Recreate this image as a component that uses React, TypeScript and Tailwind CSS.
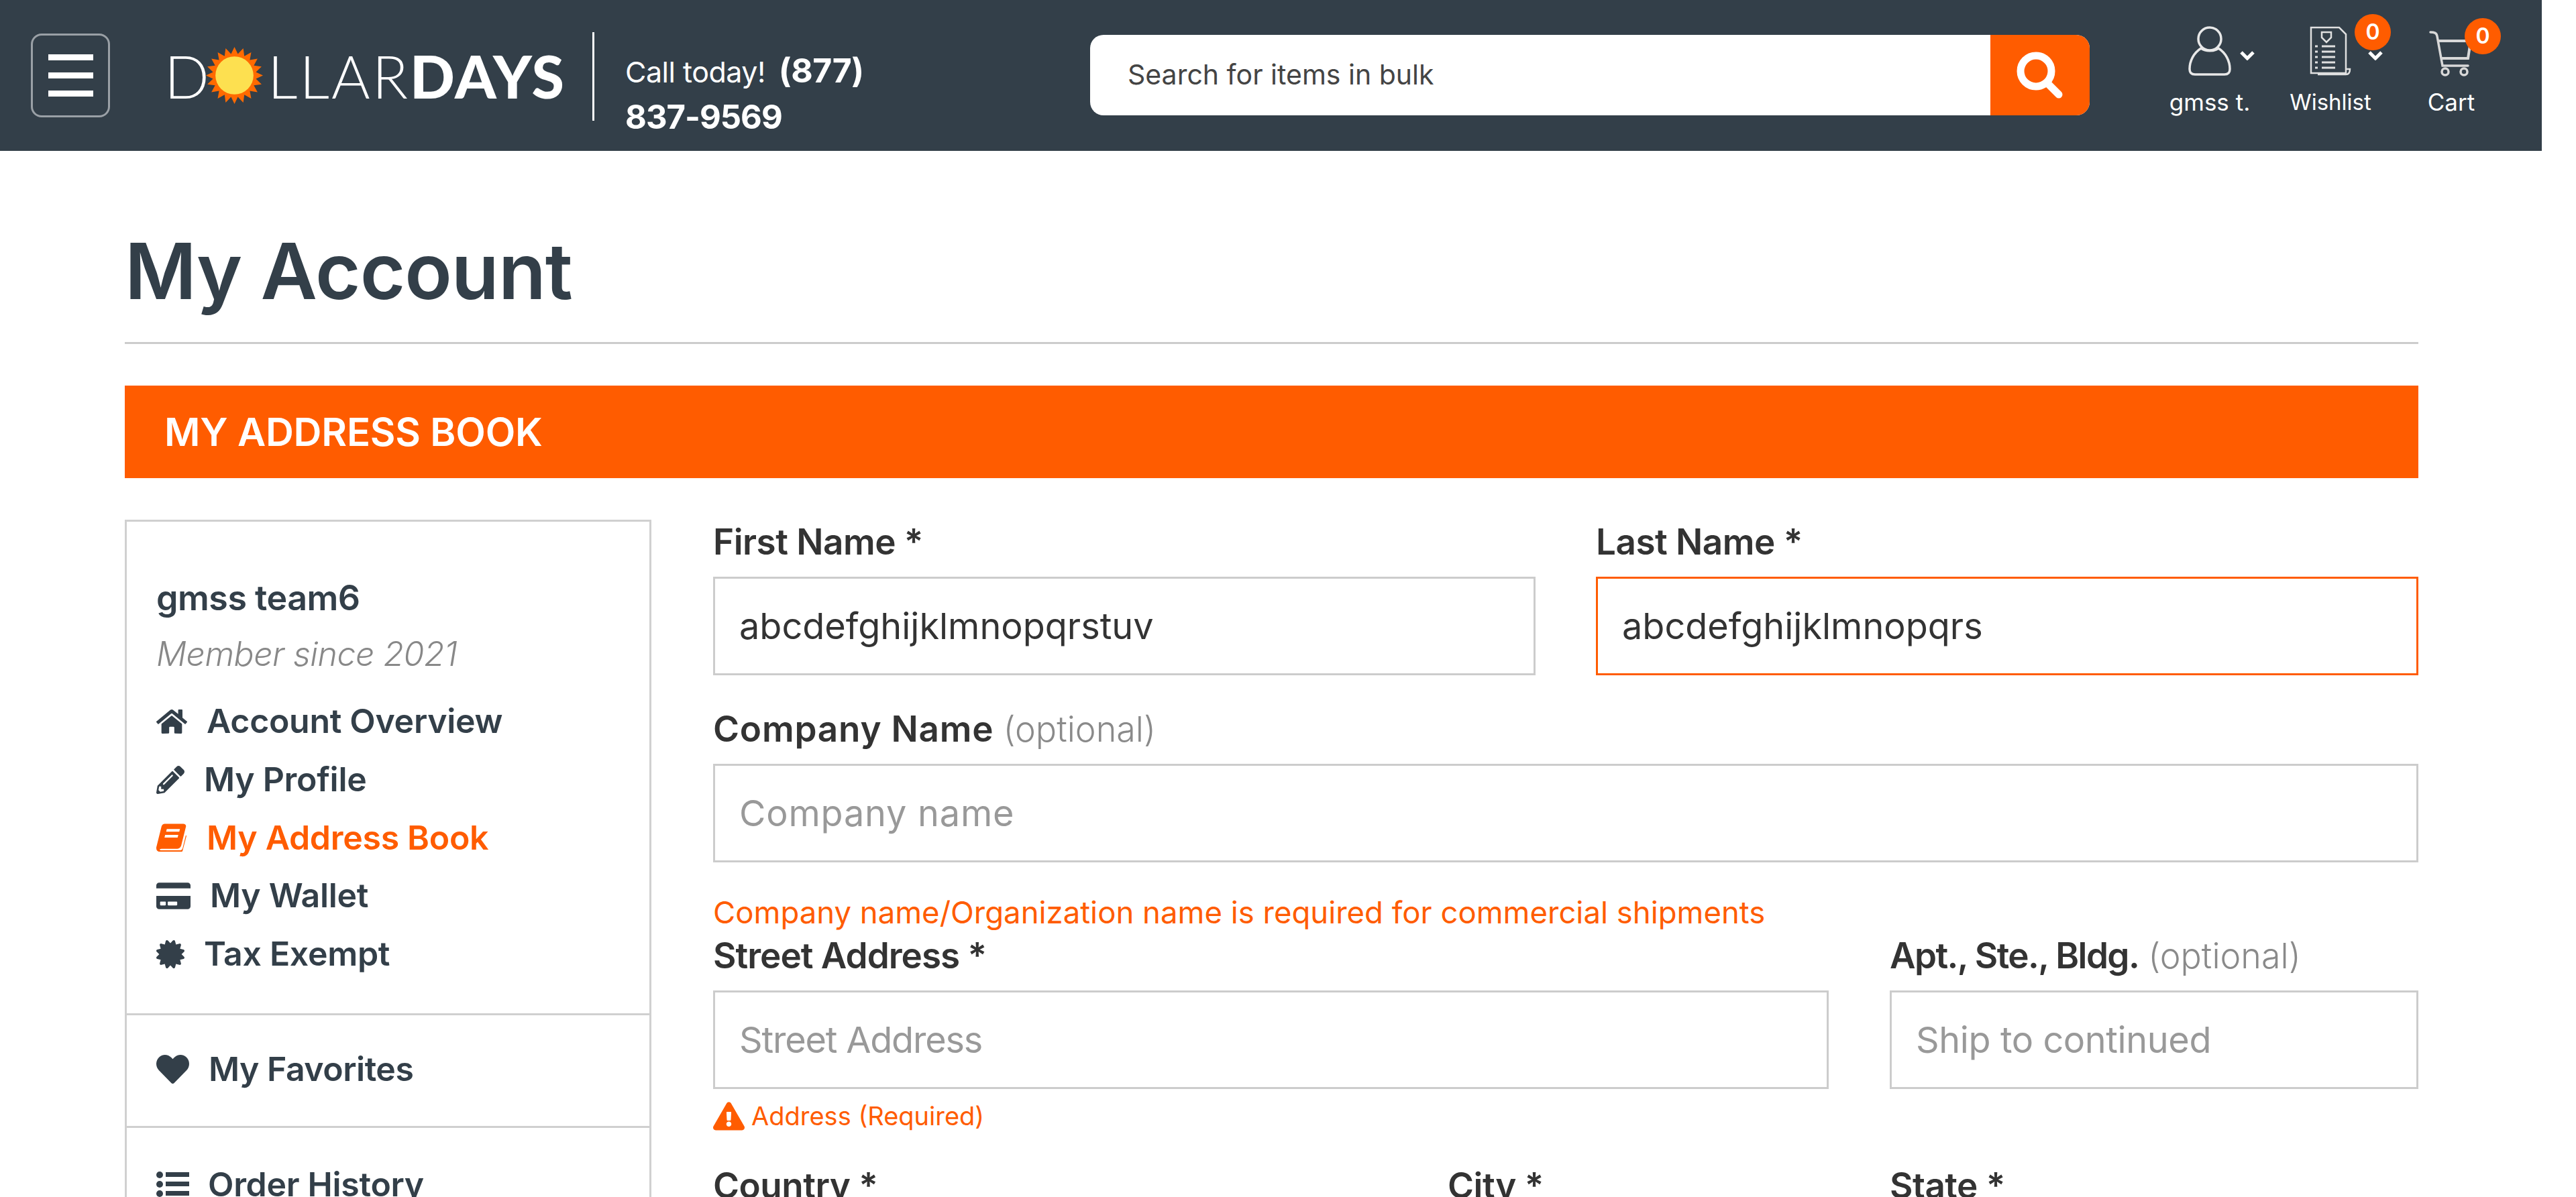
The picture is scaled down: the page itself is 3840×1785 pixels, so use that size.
import { FaCertificate, FaCreditCard, FaExclamationTriangle, FaHeart, FaHome, FaPencilAlt } from 'react-icons/fa'

function BookIcon({ className }: { className?: string }) {
  return (
    <svg viewBox="0 0 46 42" className={className} fill="currentColor">
      <path d="M13 0h28c3 0 5 2 4 5l-7 28c-1 3-3 5-6 5H8c-2 0-3 1-3 1.200 0 .6 1 1.300 3 1.300h28c2 0 3-1 4-3l5-20 1 1-6 23c-.5 1-1.500 1.500-3 1.500H7c-4 0-7-2-7-6 0-1 0-2 .5-3L8 4c.8-2.500 2.500-4 5-4zm3 8-1 4h20l1-4zm-2.500 9-1 4h20l1-4z" fillRule="evenodd" />
    </svg>
  )
}

function ListIcon({ className }: { className?: string }) {
  return (
    <svg viewBox="0 0 49 40" className={className} fill="currentColor">
      <circle cx="5" cy="6" r="5" />
      <circle cx="5" cy="20" r="5" />
      <circle cx="5" cy="34" r="5" />
      <rect x="14" y="2" width="35" height="7" />
      <rect x="14" y="16" width="35" height="7" />
      <rect x="14" y="30" width="35" height="7" />
    </svg>
  )
}

const NAV = [
  { label: 'Account Overview', icon: FaHome, size: 'w-[46px] h-[42px]', gap: 'mr-[31px]', row: 'h-[87px]' },
  { label: 'My Profile', icon: FaPencilAlt, size: 'w-[42px] h-[42px]', gap: 'mr-[31px]', row: 'h-[87px]' },
  { label: 'My Address Book', icon: BookIcon, size: 'w-[45px] h-[42px]', gap: 'mr-[32px]', row: 'h-[86px]', active: true },
  { label: 'My Wallet', icon: FaCreditCard, size: 'w-[51px] h-[46px]', gap: 'mr-[31px]', row: 'h-[87px]' },
  { label: 'Tax Exempt', icon: FaCertificate, size: 'w-[42px] h-[42px]', gap: 'mr-[31px]', row: 'h-[87px]' },
]

function sunPoints() {
  const pts: string[] = []
  for (let i = 0; i < 40; i++) {
    const r = i % 2 === 0 ? 42 : 32
    const a = (i / 40) * Math.PI * 2
    pts.push(`${42 + r * Math.cos(a)},${42 + r * Math.sin(a)}`)
  }
  return pts.join(' ')
}

function Field({ label, optional, className, labelClass, inputClass, value, placeholder, error }: {
  label: string
  optional?: boolean
  className?: string
  labelClass?: string
  inputClass?: string
  value?: string
  placeholder?: string
  error?: boolean
}) {
  return (
    <div className={className}>
      <label className="block h-[66px] mb-[19px] text-[53px] leading-[66px] font-semibold text-[#333] whitespace-nowrap">
        <span className={labelClass ?? 'tracking-[-0.5px]'}>{label}</span>
        {optional && <span className="ml-[14px] text-[52px] font-light text-[#8a8a8a]">(optional)</span>}
      </label>
      <input
        readOnly
        defaultValue={value}
        placeholder={placeholder}
        className={`block w-full h-[147px] px-[36px] border-[3px] bg-white text-[54px] text-[#333] placeholder:text-[#999] outline-none ${error ? 'border-[#ff5c00]' : 'border-[#ccc]'} ${inputClass ?? ''}`}
      />
    </div>
  )
}

export default function App() {
  return (
    <div className="w-[3789px] h-[1785px] overflow-hidden bg-white font-['Inter',sans-serif]">
      {/* Header */}
      <header className="h-[225px] bg-[#333f49] flex items-center text-white">
        <button className="ml-[46px] w-[118px] h-[125px] border-[3px] border-[#9aa0a6] rounded-[16px] flex flex-col items-center justify-center gap-[18px]">
          <span className="block w-[67px] h-[9px] bg-white" />
          <span className="block w-[67px] h-[9px] bg-white" />
          <span className="block w-[67px] h-[9px] bg-white" />
        </button>

        {/* Logo */}
        <div className="ml-[81px] w-[593px] flex items-center font-['Lato',sans-serif] text-[88px] leading-none">
          <span className="font-light">D</span>
          <svg viewBox="0 0 84 84" className="w-[85px] h-[85px] -ml-[5px] shrink-0">
            <polygon points={sunPoints()} fill="#ff6a00" />
            <circle cx="42" cy="42" r="28" fill="#fde050" />
          </svg>
          <span className="ml-[7px] font-light tracking-[3px]">LLAR</span>
          <span className="font-black tracking-[2px]">DAYS</span>
        </div>

        <div className="ml-[45px] w-[3px] h-[132px] mt-[3px] bg-white" />

        <div className="ml-[46px] w-[370px] pt-[54px] text-[49px] leading-[67px] font-bold tracking-[-0.5px] whitespace-nowrap">
          <div className="flex items-baseline">
            <span className="text-[43px] font-normal mr-[20px] tracking-[-0.5px]">Call today!</span>
            <span className="text-[50px]">(877)</span>
          </div>
          <div className="tracking-[-1px]">837-9569</div>
        </div>

        {/* Search */}
        <div className="ml-[323px] w-[1490px] h-[120px] -mt-[2px] flex rounded-[20px] overflow-hidden bg-white">
          <div className="flex-1 pl-[56px] flex items-center text-[41px] text-[#444]">Search for items in bulk</div>
          <button className="w-[148px] bg-[#ff5c00] flex items-center justify-center">
            <svg viewBox="0 0 70 70" className="w-[70px] h-[70px]" fill="none" stroke="#fff" strokeWidth="11" strokeLinecap="round">
              <circle cx="29" cy="29" r="23" />
              <line x1="46" y1="47" x2="63" y2="64" />
            </svg>
          </button>
        </div>

        {/* Account, wishlist, cart */}
        <div className="ml-[89px] flex h-full">
          <div className="relative w-[180px] flex flex-col items-center pt-[39px]">
            <svg viewBox="0 0 64 74" className="w-[64px] h-[74px]" fill="none" stroke="#e8e8e8" strokeWidth="3.5">
              <ellipse cx="32" cy="19" rx="17" ry="17" />
              <path d="M19 33C8 40 2 52 2 64c0 6 3 8 8 8h44c5 0 8-2 8-8 0-12-6-24-17-31-7 5-19 5-26 0z" />
            </svg>
            <Chevron className="absolute left-[135px] top-[76px]" />
            <div className="mt-[19px] text-[35px] leading-[40px] whitespace-nowrap">gmss t.</div>
          </div>
          <div className="relative w-[180px] flex flex-col items-center pt-[39px]">
            <svg viewBox="0 0 62 74" className="w-[62px] h-[74px]" fill="none" stroke="#e0e0e0" strokeWidth="2.5">
              <path d="M2 2h42l10 10v58H2z" />
              <path d="M54 64h6c0 6-3 8-6 8H12" />
              <path d="M18 9h14v8l-7 7-7-7z" />
              <path d="M8 30h4M18 30h20M8 38h4M18 38h20M8 46h4M18 46h20M8 54h4M18 54h20M8 62h4M18 62h20" strokeWidth="3" />
            </svg>
            <Chevron className="absolute left-[146px] top-[76px]" />
            <Badge className="left-[126px] top-[21px]" />
            <div className="mt-[19px] text-[33px] leading-[40px] whitespace-nowrap">Wishlist</div>
          </div>
          <div className="relative w-[180px] flex flex-col items-center pt-[39px]">
            <svg viewBox="0 0 66 74" className="w-[66px] h-[74px] mt-[5px] -mb-[5px]" fill="none" stroke="#d8d8d8" strokeWidth="3.5" strokeLinecap="round">
              <path d="M2 4c6 0 9 1 10 6l8 44h38" />
              <path d="M14 17h48l-4 26H19" strokeWidth="4" />
              <circle cx="24" cy="63" r="5" />
              <circle cx="52" cy="63" r="5" />
            </svg>
            <Badge className="left-[110px] top-[27px]" />
            <div className="mt-[19px] text-[35px] leading-[40px] whitespace-nowrap">Cart</div>
          </div>
        </div>
      </header>

      <main className="pl-[186px] pr-[184px]">
        <div className="h-[288px] border-b-[3px] border-[#ccc] flex items-center pt-[72px]">
          <h1 className="text-[116px] leading-none font-semibold text-[#333f49] tracking-[-1px]">My Account</h1>
        </div>

        <div className="mt-[62px] h-[138px] bg-[#ff5c00] px-[59px] flex items-center text-[58px] font-semibold text-white tracking-[-0.2px]">
          MY ADDRESS BOOK
        </div>

        <div className="mt-[62px] flex gap-[93px] items-start">
          {/* Sidebar */}
          <aside className="w-[785px] shrink-0 border-[3px] border-b-0 border-[#d0d0d0] text-[#333f49]">
            <div className="pt-[86px] pl-[44px] h-[736px] border-b-[3px] border-[#d0d0d0]">
              <div className="text-[52px] leading-[56px] font-semibold whitespace-nowrap tracking-[-0.5px]">gmss team6</div>
              <div className="mt-[27px] text-[50px] leading-[56px] font-light italic text-[#888] whitespace-nowrap tracking-[-0.5px]">Member since 2021</div>
              <nav className="mt-[29px]">
                {NAV.map(({ label, icon: Icon, size, gap, row, active }) => (
                  <div key={label} className={`flex items-center ${row} ${active ? 'text-[#ff5c00]' : ''}`}>
                    <Icon className={`${size} ${gap} shrink-0`} />
                    <span className="text-[50px] -ml-[2px] font-semibold whitespace-nowrap tracking-[-0.3px]">{label}</span>
                  </div>
                ))}
              </nav>
            </div>
            <div className="h-[168px] pb-[4px] pl-[44px] flex items-center border-b-[3px] border-[#d0d0d0]">
              <FaHeart className="w-[49px] h-[49px] mr-[29px] shrink-0" />
              <span className="text-[50px] font-semibold tracking-[-0.5px]">My Favorites</span>
            </div>
            <div className="h-[168px] pl-[44px] flex items-center">
              <ListIcon className="w-[49px] h-[40px] mr-[28px] shrink-0" />
              <span className="text-[50px] font-semibold tracking-[-0.3px]">Order History</span>
            </div>
          </aside>

          {/* Form */}
          <form className="flex-1 min-w-0 -ml-[1px]">
            <div className="flex gap-[90px]">
              <Field className="flex-1" label="First Name *" value="abcdefghijklmnopqrstuv" />
              <Field className="flex-1" label="Last Name *" value="abcdefghijklmnopqrs" error />
            </div>
            <Field className="mt-[47px]" label="Company Name" labelClass="tracking-[0.8px]" inputClass="placeholder:tracking-[0.8px]" optional placeholder="Company name" />
            <div className="mt-[47px] h-[56px] text-[45.5px] leading-[56px] text-[#ff5c00] whitespace-nowrap">
              Company name/Organization name is required for commercial shipments
            </div>
            <div className="mt-[3px] flex gap-[91px]">
              <Field className="w-[1663px]" label="Street Address *" labelClass="tracking-[-1px]" inputClass="placeholder:tracking-[-1.2px]" placeholder="Street Address" />
              <Field className="flex-1" label="Apt., Ste., Bldg." labelClass="tracking-[-1.600px]" inputClass="placeholder:tracking-[-0.4px]" optional placeholder="Ship to continued" />
            </div>
            <div className="mt-[12px] h-[56px] flex items-center text-[38px] text-[#ff5c00]">
              <FaExclamationTriangle className="w-[47px] h-[47px] mr-[10px] shrink-0" />
              Address (Required)
            </div>
            <div className="mt-[43px] flex h-[66px] text-[53px] leading-[66px] font-semibold text-[#333] tracking-[-0.5px]">
              <div className="w-[1095px]">Country *</div>
              <div className="w-[659px]">City *</div>
              <div>State *</div>
            </div>
          </form>
        </div>
      </main>
    </div>
  )
}

function Chevron({ className }: { className?: string }) {
  return (
    <svg viewBox="0 0 22 14" className={`w-[22px] h-[14px] ${className}`} fill="none" stroke="#fff" strokeWidth="5">
      <path d="M2 2l9 9 9-9" />
    </svg>
  )
}

function Badge({ className }: { className?: string }) {
  return (
    <span className={`absolute w-[54px] h-[54px] rounded-full bg-[#ff5c00] flex items-center justify-center text-[32px] font-semibold text-white ${className}`}>
      0
    </span>
  )
}
